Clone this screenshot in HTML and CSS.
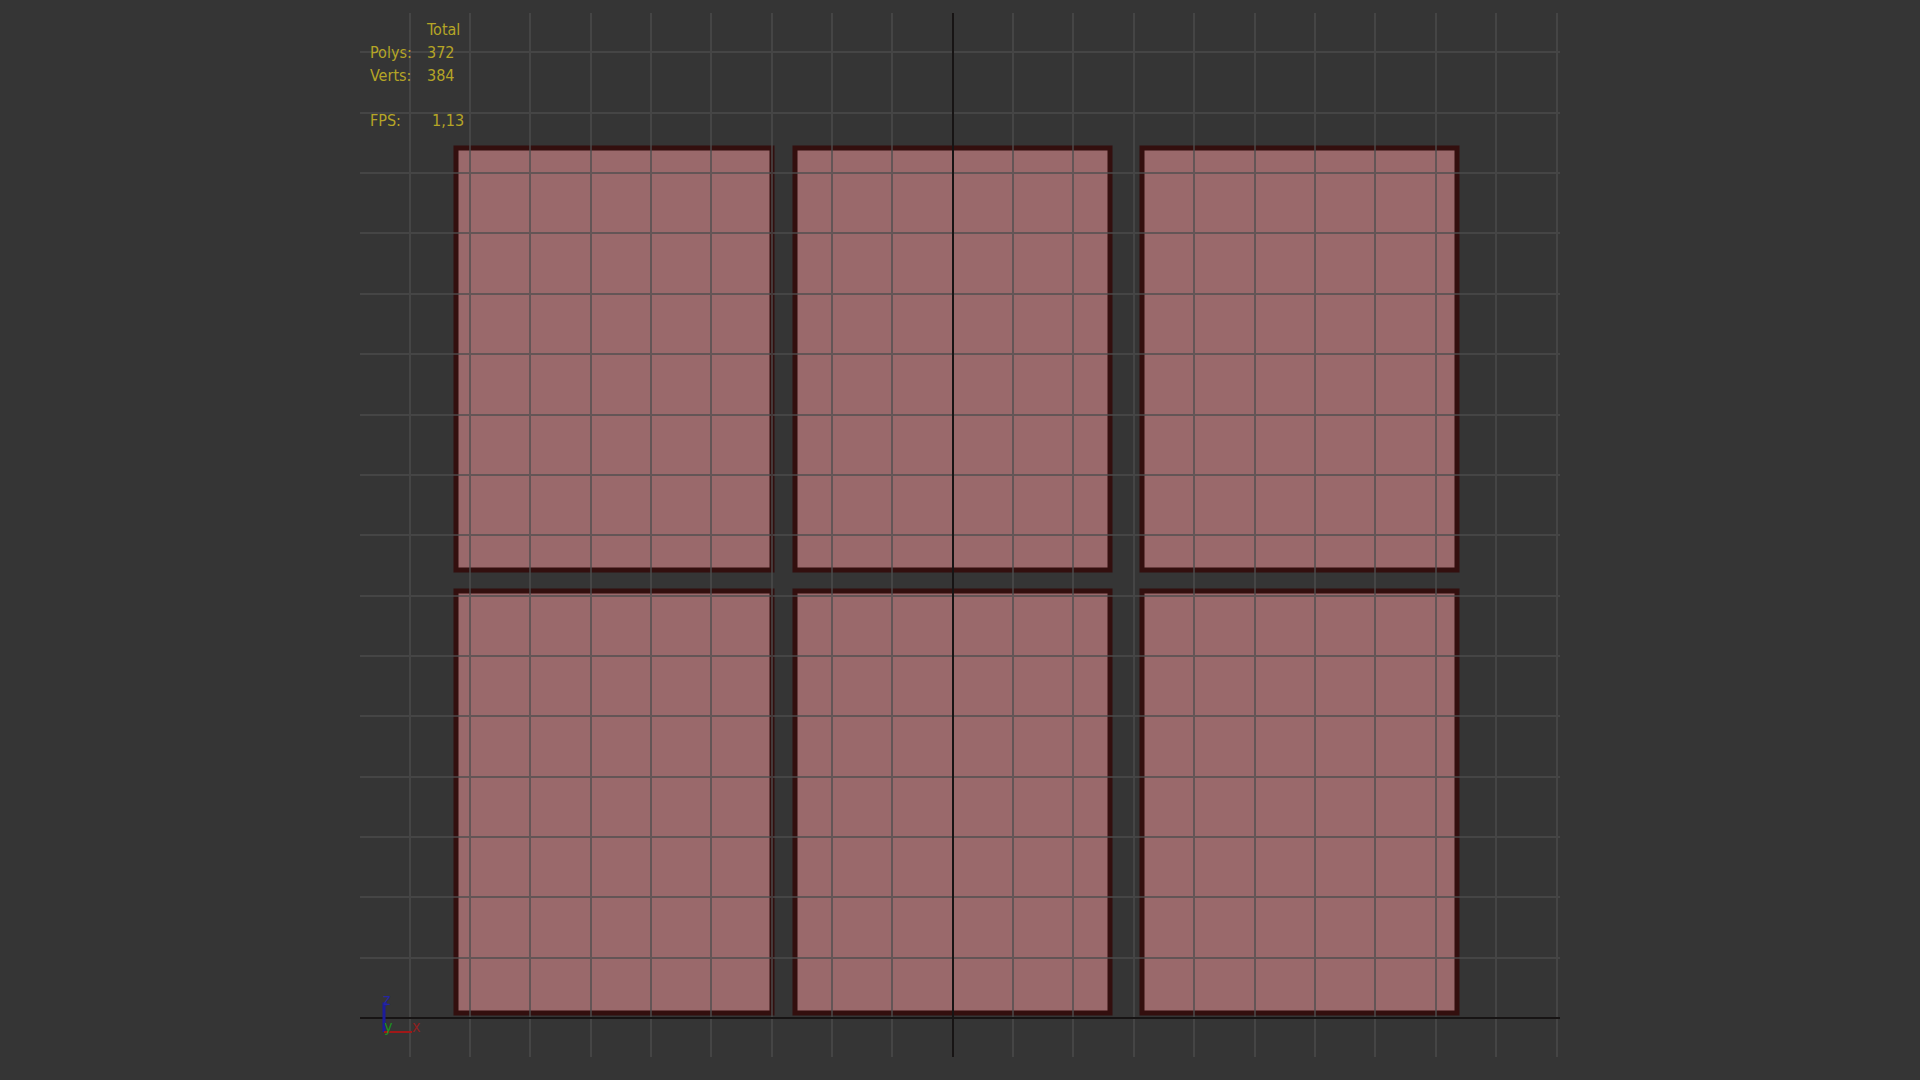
FILE: index.html
```
<!DOCTYPE html>
<html lang="en">
<head>
  <meta charset="UTF-8">
  <meta name="viewport" content="width=device-width, initial-scale=1.0">
  <title>Front Viewport</title>
  <link rel="stylesheet" href="styles.css">
</head>
<body>
  <main class="viewport">
    <svg class="scene" viewBox="0 0 1200 1044" role="img" aria-label="Front view of six panels">
      <!-- panels -->
      <g class="panels">
        <rect x="96" y="135" width="316" height="422"/>
        <rect x="435" y="135" width="315" height="422"/>
        <rect x="782" y="135" width="315" height="422"/>
        <rect x="96" y="578" width="316" height="422"/>
        <rect x="435" y="578" width="315" height="422"/>
        <rect x="782" y="578" width="315" height="422"/>
      </g>

      <!-- grid -->
      <path class="grid" d="M50 0V1044M110 0V1044M170 0V1044M231 0V1044M291 0V1044M351 0V1044M412 0V1044M472 0V1044M532 0V1044M653 0V1044M713 0V1044M774 0V1044M834 0V1044M895 0V1044M955 0V1044M1015 0V1044M1076 0V1044M1136 0V1044M1197 0V1044
        M0 39H1200M0 100H1200M0 160H1200M0 220H1200M0 281H1200M0 341H1200M0 402H1200M0 462H1200M0 522H1200M0 583H1200M0 643H1200M0 703H1200M0 764H1200M0 824H1200M0 884H1200M0 945H1200"/>
      <path class="origin" d="M593 0V1044M0 1005H1200"/>

      <!-- axis gizmo -->
      <g class="gizmo">
        <path class="axis-z" d="M24 1019V991H27"/>
        <path class="axis-x" d="M24 1019H52"/>
        <text class="label-z" x="23" y="992">z</text>
        <text class="label-x" x="52" y="1019">x</text>
        <text class="label-y" x="24" y="1019">y</text>
      </g>
    </svg>

    <table class="stats">
      <tr><td></td><th scope="col">Total</th></tr>
      <tr><th scope="row">Polys:</th><td>372</td></tr>
      <tr><th scope="row">Verts:</th><td>384</td></tr>
      <tr class="fps"><th scope="row">FPS:</th><td>1,13</td></tr>
    </table>
  </main>
</body>
</html>
```
FILE: styles.css
```
body {
  margin: 0;
  background-color: #353535;
  font-family: "DejaVu Sans Condensed", "DejaVu Sans", Tahoma, sans-serif;
}

.viewport {
  position: relative;
  width: 62.5%;
  margin: 13px auto 0;
}

.scene {
  display: block;
  width: 100%;
}

.panels rect {
  fill: #9a696b;
  stroke: #330f0e;
  stroke-width: 5;
}

.grid {
  fill: none;
  stroke: #4d4d4d;
  stroke-opacity: 0.7;
  stroke-width: 2;
}

.origin {
  fill: none;
  stroke: #171414;
  stroke-width: 2;
}

.gizmo path {
  fill: none;
  stroke-width: 3;
}

.gizmo text {
  font-size: 16px;
}

.gizmo .axis-z {
  stroke: #1c1c9c;
}

.gizmo .axis-x {
  stroke: #a01818;
  stroke-width: 2;
}

.label-z {
  fill: #2525a5;
}

.label-x {
  fill: #8f2020;
}

.label-y {
  fill: #1f8f1f;
}

/* scene statistics */
.stats {
  position: absolute;
  top: 5px;
  left: 10px;
  border-collapse: collapse;
  color: #b5a526;
  font-size: 16px;
  line-height: 23px;
}

.stats th,
.stats td {
  height: 23px;
  padding: 0;
  font-weight: normal;
  text-align: left;
}

.stats th[scope="row"] {
  width: 57px;
}

.stats .fps th,
.stats .fps td {
  padding-top: 22px;
}

.stats .fps td {
  padding-left: 5px;
}
```
